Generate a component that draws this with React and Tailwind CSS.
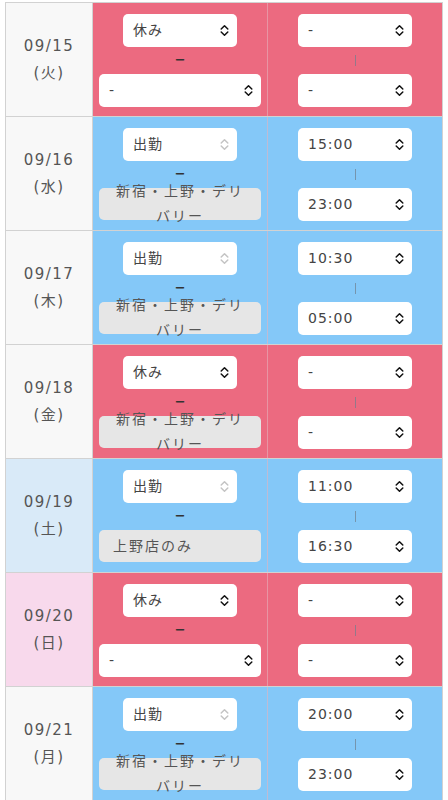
import React from 'react';

const font = { fontFamily: '"DejaVu Sans", "Noto Sans CJK JP", sans-serif' };

const rows = [
  { date: '09/15', day: '火', off: true, shop: null, from: '-', to: '-' },
  { date: '09/16', day: '水', off: false, shop: '新宿・上野・デリバリー', from: '15:00', to: '23:00' },
  { date: '09/17', day: '木', off: false, shop: '新宿・上野・デリバリー', from: '10:30', to: '05:00' },
  { date: '09/18', day: '金', off: true, shop: '新宿・上野・デリバリー', from: '-', to: '-' },
  { date: '09/19', day: '土', off: false, shop: '上野店のみ', short: true, from: '11:00', to: '16:30' },
  { date: '09/20', day: '日', off: true, shop: null, from: '-', to: '-' },
  { date: '09/21', day: '月', off: false, shop: '新宿・上野・デリバリー', from: '20:00', to: '23:00' },
];

const Arrows = ({ muted }) => (
  <svg width="9" height="13" viewBox="0 0 9 13" fill="none" stroke={muted ? '#c4c4c4' : '#111'} strokeWidth="1.5" strokeLinecap="round" strokeLinejoin="round">
    <path d="M1.2 5 L4.5 1.7 L7.8 5" />
    <path d="M1.2 8 L4.5 11.3 L7.8 8" />
  </svg>
);

const Select = ({ value, muted, className = '' }) => (
  <div className={`flex items-center justify-between bg-white rounded-[5px] h-[33px] pl-[10px] pr-[8px] text-[14px] text-[#444] tracking-[1px] ${className}`}>
    <span>{value}</span>
    <Arrows muted={muted} />
  </div>
);

function Row({ r }) {
  const dateBg = r.day === '土' ? 'bg-[#d9eaf8]' : r.day === '日' ? 'bg-[#f8d9ec]' : 'bg-[#f8f8f8]';
  const cellBg = r.off ? 'bg-[#ec6a80]' : 'bg-[#84c8f8]';
  return (
    <div className="flex h-[114px] border-b border-[#d2d2d2]">
      <div className={`w-[87px] shrink-0 border-r border-[#d2d2d2] ${dateBg} flex flex-col items-center justify-center text-[15px] leading-[27px] tracking-[1.5px] text-[#555]`}>
        <div>{r.date}</div>
        <div>({r.day})</div>
      </div>
      <div className={`w-[175px] shrink-0 border-r border-[#e6b3bd]/60 ${cellBg} flex flex-col px-[6px] pt-[11px]`}>
        <Select value={r.off ? '休み' : '出勤'} muted={!r.off} className="w-[114px] self-center" />
        <div className="h-[27px] flex items-center justify-center text-[10px] text-[#333] font-bold">ー</div>
        {r.shop ? (
          <div className={`h-[32px] bg-[#e6e6e6] rounded-[5px] flex items-center ${r.short ? 'justify-start pl-[14px]' : 'justify-center text-center px-[10px]'} text-[14px] leading-[25px] tracking-[2px] text-[#555]`}>
            <span>{r.shop}</span>
          </div>
        ) : (
          <Select value="-" />
        )}
      </div>
      <div className={`flex-1 ${cellBg} flex flex-col items-center pt-[11px]`}>
        <Select value={r.from} className="w-[114px]" />
        <div className="h-[27px] flex items-center justify-center">
          <div className="w-px h-[11px] bg-[#6f7f8f]/70" />
        </div>
        <Select value={r.to} className="w-[114px]" />
      </div>
    </div>
  );
}

export default function App() {
  return (
    <div className="w-[448px] h-[800px] bg-white pt-[2px] pl-[5px] pr-[5px] overflow-hidden" style={font}>
      <div className="border-t border-l border-r border-[#d2d2d2]">
        {rows.map((r, i) => <Row key={i} r={r} />)}
      </div>
    </div>
  );
}
